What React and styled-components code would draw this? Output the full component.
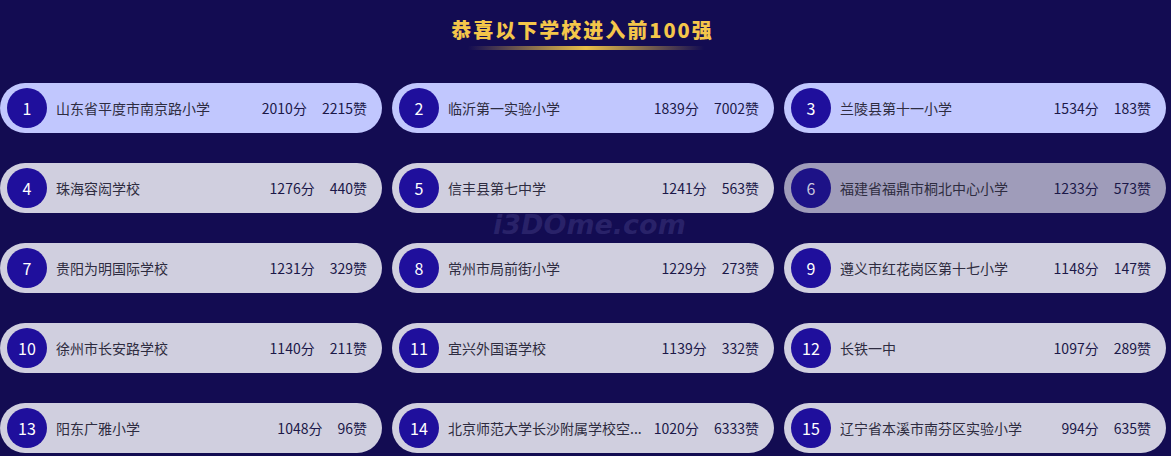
import React from 'react';
import styled, { createGlobalStyle } from 'styled-components';

const GlobalStyle = createGlobalStyle`
  html, body {
    margin: 0;
    padding: 0;
    background: #130c52;
  }
  body {
    font-family: "Noto Sans CJK SC", "Noto Sans", sans-serif;
  }
`;

const Page = styled.div`
  position: relative;
  width: 1171px;
  height: 456px;
  overflow: hidden;
  background: #130c52;
  padding-top: 16px;
  box-sizing: border-box;
`;

const TitleWrap = styled.div`
  display: flex;
  flex-direction: column;
  align-items: center;
`;

const Title = styled.h2`
  margin: 0 6px 0 0;
  height: 28px;
  line-height: 28px;
  font-size: 20px;
  font-weight: 900;
  letter-spacing: 2px;
  color: #f4c64a;
`;

const TitleBar = styled.div`
  margin-top: 2px;
  width: 236px;
  height: 4px;
  background: linear-gradient(90deg, rgba(232, 190, 70, 0) 0%, #e9bf48 50%, rgba(232, 190, 70, 0) 100%);
`;

const Grid = styled.div`
  margin-top: 33px;
  width: 1166px;
  display: grid;
  grid-template-columns: repeat(3, 382px);
  column-gap: 10px;
  row-gap: 30px;
`;

const Card = styled.div`
  height: 50px;
  border-radius: 25px;
  display: flex;
  align-items: center;
  padding: 0 15px 0 7px;
  box-sizing: border-box;
  background: ${p => (p.$top ? '#c1c7fe' : p.$dim ? '#9f9cba' : '#d0cfdf')};
`;

const Rank = styled.div`
  flex: none;
  width: 40px;
  height: 40px;
  border-radius: 50%;
  background: ${p => (p.$dim ? '#1d1287' : '#1f0f9c')};
  color: ${p => (p.$dim ? '#c9c6de' : '#fff')};
  display: flex;
  align-items: center;
  justify-content: center;
  font-size: 16px;
`;

const Name = styled.div`
  flex: 1;
  min-width: 0;
  margin: 0 12px 0 9px;
  font-size: 14px;
  color: #2e2c40;
  white-space: nowrap;
  overflow: hidden;
  text-overflow: ellipsis;
`;

const Stats = styled.div`
  flex: none;
  display: flex;
  gap: 15px;
  font-size: 14px;
  color: #1b1848;
  white-space: nowrap;
`;

const Watermark = styled.div`
  position: absolute;
  left: 493px;
  top: 209px;
  font-family: "DejaVu Sans", sans-serif;
  font-style: italic;
  font-weight: 700;
  font-size: 27px;
  color: rgba(120, 115, 190, 0.22);
  pointer-events: none;
`;

const schools = [
  ['山东省平度市南京路小学', 2010, 2215],
  ['临沂第一实验小学', 1839, 7002],
  ['兰陵县第十一小学', 1534, 183],
  ['珠海容闳学校', 1276, 440],
  ['信丰县第七中学', 1241, 563],
  ['福建省福鼎市桐北中心小学', 1233, 573],
  ['贵阳为明国际学校', 1231, 329],
  ['常州市局前街小学', 1229, 273],
  ['遵义市红花岗区第十七小学', 1148, 147],
  ['徐州市长安路学校', 1140, 211],
  ['宜兴外国语学校', 1139, 332],
  ['长铁一中', 1097, 289],
  ['阳东广雅小学', 1048, 96],
  ['北京师范大学长沙附属学校空...', 1020, 6333],
  ['辽宁省本溪市南芬区实验小学', 994, 635],
];

export default function App() {
  return (
    <Page>
      <GlobalStyle />
      <TitleWrap>
        <Title>恭喜以下学校进入前100强</Title>
        <TitleBar />
      </TitleWrap>
      <Grid>
        {schools.map(([name, score, likes], i) => {
          const rank = i + 1;
          const dim = rank === 6;
          return (
            <Card key={rank} $top={rank <= 3} $dim={dim}>
              <Rank $dim={dim}>{rank}</Rank>
              <Name>{name}</Name>
              <Stats>
                <span>{score}分</span>
                <span>{likes}赞</span>
              </Stats>
            </Card>
          );
        })}
      </Grid>
      <Watermark>i3DOme.com</Watermark>
    </Page>
  );
}
